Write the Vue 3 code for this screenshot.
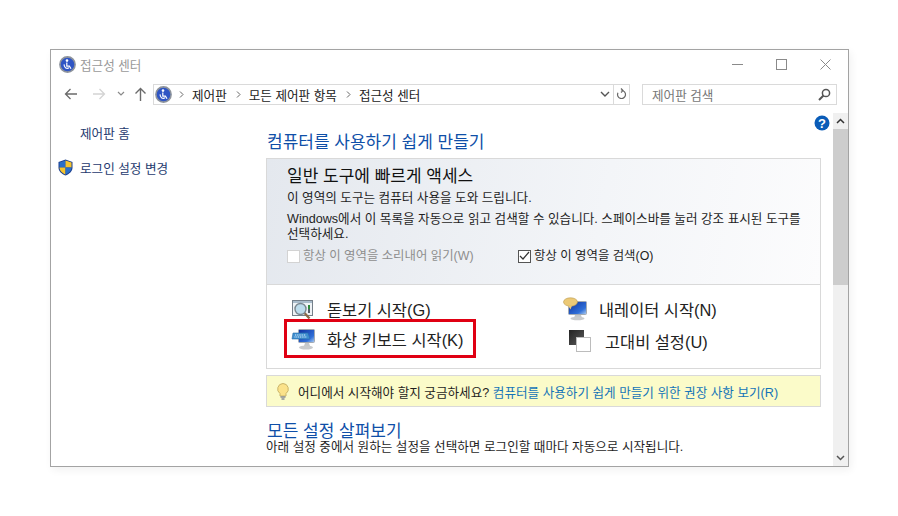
<script setup>
const trail = ['제어판', '모든 제어판 항목', '접근성 센터']
</script>

<template>
  <div class="page">
    <div class="window">
      <!-- 제목 표시줄 -->
      <div class="titlebar">
        <svg class="app-icon" width="17" height="17" viewBox="0 0 17 17">
          <circle cx="8.5" cy="8.5" r="7.6" fill="#2f55c4" stroke="#8d939c" stroke-width="1.6" />
          <circle cx="8" cy="4.6" r="1.3" fill="#fff" />
          <path d="M7.8 6.5v3.6h2.6l1.6 2.6M5.2 8.4a3.2 3.2 0 0 0 4.8 3.4" fill="none" stroke="#fff" stroke-width="1.2" />
        </svg>
        <span class="title">접근성 센터</span>
        <div class="win-btns">
          <svg width="11" height="11" viewBox="0 0 11 11"><path d="M0 5.5h11" stroke="#8a8a8a" /></svg>
          <svg width="11" height="11" viewBox="0 0 11 11"><rect x=".5" y=".5" width="10" height="10" fill="none" stroke="#8a8a8a" /></svg>
          <svg width="11" height="11" viewBox="0 0 11 11"><path d="M.5.5l10 10M10.5.5l-10 10" stroke="#8a8a8a" /></svg>
        </div>
      </div>

      <!-- 주소 표시줄 -->
      <div class="navbar">
        <div class="nav-btns">
          <svg width="14" height="14" viewBox="0 0 14 14"><path d="M13 7H1.5M6.5 2l-5 5 5 5" fill="none" stroke="#6b6b6b" stroke-width="1.3" /></svg>
          <svg class="nav-fwd" width="14" height="14" viewBox="0 0 14 14"><path d="M1 7h11.5M7.5 2l5 5-5 5" fill="none" stroke="#d4d4d4" stroke-width="1.3" /></svg>
          <svg class="nav-drop" width="8" height="6" viewBox="0 0 8 6"><path d="M1 1l3 3 3-3" fill="none" stroke="#8a8a8a" stroke-width="1.2" /></svg>
          <svg class="nav-up" width="13" height="14" viewBox="0 0 13 14"><path d="M6.5 14V1.5M1.5 6.5l5-5 5 5" fill="none" stroke="#6b6b6b" stroke-width="1.4" /></svg>
        </div>
        <div class="address">
          <svg class="addr-icon" width="17" height="17" viewBox="0 0 17 17">
            <circle cx="8.5" cy="8.5" r="7.6" fill="#2f55c4" stroke="#8d939c" stroke-width="1.6" />
            <circle cx="8" cy="4.6" r="1.3" fill="#fff" />
            <path d="M7.8 6.5v3.6h2.6l1.6 2.6M5.2 8.4a3.2 3.2 0 0 0 4.8 3.4" fill="none" stroke="#fff" stroke-width="1.2" />
          </svg>
          <template v-for="item in trail" :key="item">
            <svg class="crumb-sep" width="5" height="7" viewBox="0 0 5 7"><path d="M1 .5l3 3-3 3" fill="none" stroke="#666" /></svg>
            <span class="crumb">{{ item }}</span>
          </template>
          <svg class="addr-drop" width="10" height="7" viewBox="0 0 10 7"><path d="M1 1l4 4 4-4" fill="none" stroke="#555" stroke-width="1.4" /></svg>
          <div class="addr-refresh">
            <svg width="11" height="12" viewBox="0 0 11 12"><path d="M5.5 2.5a4 4 0 1 1-3.6 2.3M5 .5l2 2-2 2" fill="none" stroke="#666" stroke-width="1.2" /></svg>
          </div>
        </div>
        <div class="search">
          <span>제어판 검색</span>
          <svg width="13" height="13" viewBox="0 0 13 13"><circle cx="8" cy="5" r="3.6" fill="none" stroke="#555" stroke-width="1.5" /><path d="M5.5 7.5L1 12" stroke="#555" stroke-width="2" /></svg>
        </div>
      </div>

      <div class="body">
        <!-- 왼쪽 메뉴 -->
        <aside class="sidebar">
          <div class="side-link home">제어판 홈</div>
          <div class="side-link login">
            <svg width="15" height="17" viewBox="0 0 15 17">
              <path d="M7.5 0.5L14.5 3v5.5c0 3.8-3.2 6.6-7 8-3.8-1.4-7-4.2-7-8V3z" fill="#1c3f8f" />
              <path d="M7.5 1.5V8.5H1.5V3.6z" fill="#2a6fc9" />
              <path d="M7.5 1.5L13.5 3.6V8.5H7.5z" fill="#f6c42c" />
              <path d="M1.5 8.5h6v7c-3.2-1.3-6-3.7-6-7z" fill="#f6c42c" />
              <path d="M7.5 8.5h6c0 3.3-2.8 5.7-6 7z" fill="#2a6fc9" />
            </svg>
            <span>로그인 설정 변경</span>
          </div>
        </aside>

        <!-- 본문 -->
        <main class="content">
          <h2 class="heading first">컴퓨터를 사용하기 쉽게 만들기</h2>
          <section class="panel">
            <div class="panel-top">
              <h3>일반 도구에 빠르게 액세스</h3>
              <p class="intro">이 영역의 도구는 컴퓨터 사용을 도와 드립니다.</p>
              <p class="desc">Windows에서 이 목록을 자동으로 읽고 검색할 수 있습니다. 스페이스바를 눌러 강조 표시된 도구를 선택하세요.</p>
              <div class="checks">
                <label class="check off"><span class="box"></span>항상 이 영역을 소리내어 읽기(W)</label>
                <label class="check on">
                  <span class="box">
                    <svg width="11" height="10" viewBox="0 0 11 10"><path d="M1 5l3 3 6-7" fill="none" stroke="#333" stroke-width="1.2" /></svg>
                  </span>항상 이 영역을 검색(O)</label>
              </div>
            </div>
            <div class="tools">
              <div class="tool">
                <svg width="24" height="22" viewBox="0 0 24 22">
                  <defs>
                    <linearGradient id="screenBlue" x1="0" y1="0" x2="1" y2="1">
                      <stop offset="0" stop-color="#0f2f9e" />
                      <stop offset=".7" stop-color="#2f6fd8" />
                      <stop offset="1" stop-color="#b5d2f2" />
                    </linearGradient>
                    <linearGradient id="darkSquare" x1="0" y1="0" x2="1" y2="1">
                      <stop offset="0" stop-color="#222" />
                      <stop offset="1" stop-color="#5c5c5c" />
                    </linearGradient>
                  </defs>
                  <rect x="1.5" y="2.5" width="20" height="15" fill="#eef2f5" stroke="#75808a" />
                  <rect x="2" y="3" width="19" height="2" fill="#a9bccb" />
                  <rect x="17" y="7" width="2" height="4" fill="#2e8a3a" />
                  <rect x="17" y="11" width="2" height="4" fill="#54606a" />
                  <path d="M13.5 15l5 5.5" stroke="#8b6a48" stroke-width="2.4" />
                  <circle cx="9.5" cy="11" r="5.5" fill="#bcdcec" stroke="#7a8790" stroke-width="1.4" />
                </svg>
                <span>돋보기 시작(G)</span>
              </div>
              <div class="tool">
                <svg width="24" height="24" viewBox="0 0 24 24">
                  <rect x="5.5" y="4.5" width="18" height="13" rx="1" fill="url(#screenBlue)" stroke="#a4abb3" />
                  <path d="M12 18l-1 3h8l-1-3z" fill="#c4c7ca" />
                  <ellipse cx="14.5" cy="21.5" rx="7" ry="1.8" fill="#c9cbcd" />
                  <ellipse cx="7.5" cy="5" rx="7" ry="4.2" fill="#ecc976" stroke="#b99a50" stroke-width=".6" />
                  <path d="M5 8.5l2.5 4 1.5-4z" fill="#ecc976" />
                </svg>
                <span>내레이터 시작(N)</span>
              </div>
              <div class="tool keyboard">
                <svg width="24" height="24" viewBox="0 0 24 24">
                  <rect x="7.5" y="2.5" width="16" height="13" rx="1" fill="url(#screenBlue)" stroke="#a4abb3" />
                  <path d="M14 16l-1 3h6l-1-3z" fill="#c4c7ca" />
                  <ellipse cx="15" cy="20.5" rx="7" ry="2" fill="#c9cbcd" />
                  <path d="M2 6h15l2 6H1z" fill="#3f8fd0" stroke="#2a6ca8" stroke-width=".6" />
                  <path d="M4 8h11M3.5 10h12" stroke="#e6f2fb" stroke-width="1.1" stroke-dasharray="1 .8" />
                </svg>
                <span>화상 키보드 시작(K)</span>
              </div>
              <div class="tool contrast">
                <svg width="22" height="22" viewBox="0 0 22 22">
                  <rect x="0" y="0" width="15" height="15" fill="url(#darkSquare)" />
                  <rect x="7.5" y="7.5" width="14" height="14" fill="#fff" stroke="#bcbcbc" />
                </svg>
                <span>고대비 설정(U)</span>
              </div>
            </div>
          </section>

          <div class="tip">
            <svg width="12" height="17" viewBox="0 0 12 17">
              <path d="M6 .5a5.5 5.5 0 0 1 3 10V13H3v-2.5A5.5 5.5 0 0 1 6 .5z" fill="#fbe28a" stroke="#c9b46a" />
              <path d="M3.5 14h5M4.5 16h3" stroke="#8a8f96" stroke-width="1.4" />
            </svg>
            <span>어디에서 시작해야 할지 궁금하세요? <a>컴퓨터를 사용하기 쉽게 만들기 위한 권장 사항 보기(R)</a></span>
          </div>

          <h2 class="heading second">모든 설정 살펴보기</h2>
          <p class="all-desc">아래 설정 중에서 원하는 설정을 선택하면 로그인할 때마다 자동으로 시작됩니다.</p>

          <svg class="help" width="16" height="16" viewBox="0 0 16 16">
            <circle cx="8" cy="8" r="7.5" fill="#0a5cb8" />
            <text x="8" y="12.5" text-anchor="middle" class="help-mark">?</text>
          </svg>
        </main>

        <!-- 스크롤바 -->
        <div class="scrollbar">
          <div class="arrow">
            <svg width="9" height="6" viewBox="0 0 9 6"><path d="M1 5l3.5-3.5L8 5" fill="none" stroke="#333" stroke-width="1.5" /></svg>
          </div>
          <div class="thumb"></div>
          <div class="track"></div>
          <div class="arrow">
            <svg width="9" height="6" viewBox="0 0 9 6"><path d="M1 1l3.5 3.5L8 1" fill="none" stroke="#555" stroke-width="1.5" /></svg>
          </div>
        </div>
      </div>
    </div>
  </div>
</template>

<style>
html, body {
  margin: 0;
  background: #fff;
}
</style>

<style scoped>
.page {
  width: 898px;
  height: 516px;
  padding: 49px 0 0 50px;
  box-sizing: border-box;
  overflow: hidden;
  font-family: "Liberation Sans", "Noto Sans CJK KR", sans-serif;
  font-size: 12.6px;
  color: #1e1e1e;
}

.window {
  width: 799px;
  height: 418px;
  box-sizing: border-box;
  border: 1px solid #a3a3a3;
  background: #fff;
  box-shadow: 2px 3px 8px rgba(0, 0, 0, 0.06);
  display: flex;
  flex-direction: column;
}

.titlebar {
  height: 29px;
  display: flex;
  align-items: center;
  padding-left: 8px;
  flex: none;
}

.title {
  margin-left: 4px;
  color: #9a9a9a;
}

.win-btns {
  margin-left: auto;
  display: flex;
  align-items: center;
  gap: 33px;
  padding-right: 17px;
}

.navbar {
  height: 26px;
  flex: none;
  display: flex;
  align-items: center;
  padding-top: 4px;
  box-sizing: border-box;
}

.nav-btns {
  width: 102px;
  box-sizing: border-box;
  padding-left: 13px;
  display: flex;
  align-items: center;
}

.nav-fwd {
  margin-left: 14px;
}

.nav-drop {
  margin-left: 11px;
}

.nav-up {
  margin-left: 9px;
}

.address {
  width: 477px;
  height: 21px;
  box-sizing: border-box;
  border: 1px solid #dadada;
  display: flex;
  align-items: center;
  padding-left: 1px;
  color: #222;
}

.addr-icon {
  margin-right: 7px;
}

.crumb-sep {
  margin-right: 8px;
}

.crumb {
  margin-right: 9px;
  white-space: nowrap;
}

.addr-drop {
  margin-left: auto;
  margin-right: 3px;
}

.addr-refresh {
  width: 15px;
  height: 100%;
  border-left: 1px solid #dadada;
  display: flex;
  align-items: center;
  justify-content: center;
}

.search {
  width: 195px;
  height: 21px;
  margin-left: 12px;
  box-sizing: border-box;
  border: 1px solid #dadada;
  display: flex;
  align-items: center;
  justify-content: space-between;
  padding: 0 5px 0 9px;
  color: #777;
}

.body {
  flex: 1;
  display: flex;
  min-height: 0;
}

.sidebar {
  width: 215px;
  flex: none;
  color: #1e3a6e;
}

.side-link {
  display: flex;
  align-items: center;
}

.home {
  padding: 19px 0 0 29px;
  height: 17px;
}

.login {
  margin-top: 17px;
  padding-left: 7px;
  gap: 7px;
}

.content {
  width: 555px;
  flex: none;
  position: relative;
}

.heading {
  margin: 0;
  padding-left: 1px;
  font-weight: 400;
  font-size: 17px;
  line-height: 22px;
  color: #0f4fa8;
}

.first {
  padding-top: 27px;
  height: 26px;
}

.panel {
  width: 555px;
  height: 211px;
  box-sizing: border-box;
  border: 1px solid #d9d9d9;
}

.panel-top {
  height: 126px;
  box-sizing: border-box;
  padding: 7px 15px 0 20px;
  background: linear-gradient(100deg, #e4e8ee, #f3f5f8 60%, #fcfcfd);
  border-bottom: 1px solid #d9d9d9;
}

.panel-top h3 {
  margin: 0;
  font-weight: 400;
  font-size: 17px;
  line-height: 22px;
  color: #111;
}

.intro {
  margin: 2px 0 0;
  line-height: 17px;
}

.desc {
  margin: 5px 0 0;
  line-height: 15px;
  word-break: keep-all;
}

.checks {
  margin-top: 5px;
  display: flex;
  font-size: 12.4px;
  line-height: 18px;
}

.check {
  display: flex;
  align-items: center;
  gap: 3px;
}

.check.off {
  color: #8e8e8e;
  width: 231px;
}

.box {
  width: 11px;
  height: 11px;
  border: 1px solid #d3d3d3;
  background: #fff;
  display: flex;
  align-items: center;
  justify-content: center;
}

.check.on .box {
  border-color: #555;
}

.tools {
  display: grid;
  grid-template-columns: 272px 1fr;
  grid-auto-rows: 30px;
  padding: 9px 0 0 24px;
  font-size: 16.4px;
  color: #222;
}

.tool {
  display: flex;
  align-items: center;
  gap: 12px;
  white-space: nowrap;
}

.contrast {
  gap: 14px;
  padding-left: 6px;
  padding-top: 3px;
}

.keyboard {
  position: relative;
}

.keyboard::after {
  content: "";
  position: absolute;
  left: -7px;
  top: -5px;
  width: 192px;
  height: 39px;
  box-sizing: border-box;
  border: 3px solid #e00013;
}

.tip {
  width: 555px;
  height: 32px;
  margin-top: 6px;
  box-sizing: border-box;
  border: 1px solid #d9d9d9;
  background: #fbfbc9;
  display: flex;
  align-items: center;
  gap: 9px;
  padding-left: 10px;
}

.tip a {
  color: #1474b8;
}

.second {
  margin-top: 16px;
  line-height: 18px;
}

.all-desc {
  margin: 0;
  line-height: 12px;
}

.help {
  position: absolute;
  top: 10px;
  left: 548px;
}

.help-mark {
  font-family: "Liberation Sans", sans-serif;
  font-size: 13px;
  font-weight: 700;
  fill: #fff;
}

.scrollbar {
  width: 15px;
  margin-left: 12px;
  margin-top: 8px;
  flex: none;
  display: flex;
  flex-direction: column;
  background: #f0f0f0;
}

.arrow {
  height: 16px;
  flex: none;
  display: flex;
  align-items: center;
  justify-content: center;
}

.thumb {
  height: 156px;
  flex: none;
  background: #cdcdcd;
}

.track {
  flex: 1;
}
</style>
